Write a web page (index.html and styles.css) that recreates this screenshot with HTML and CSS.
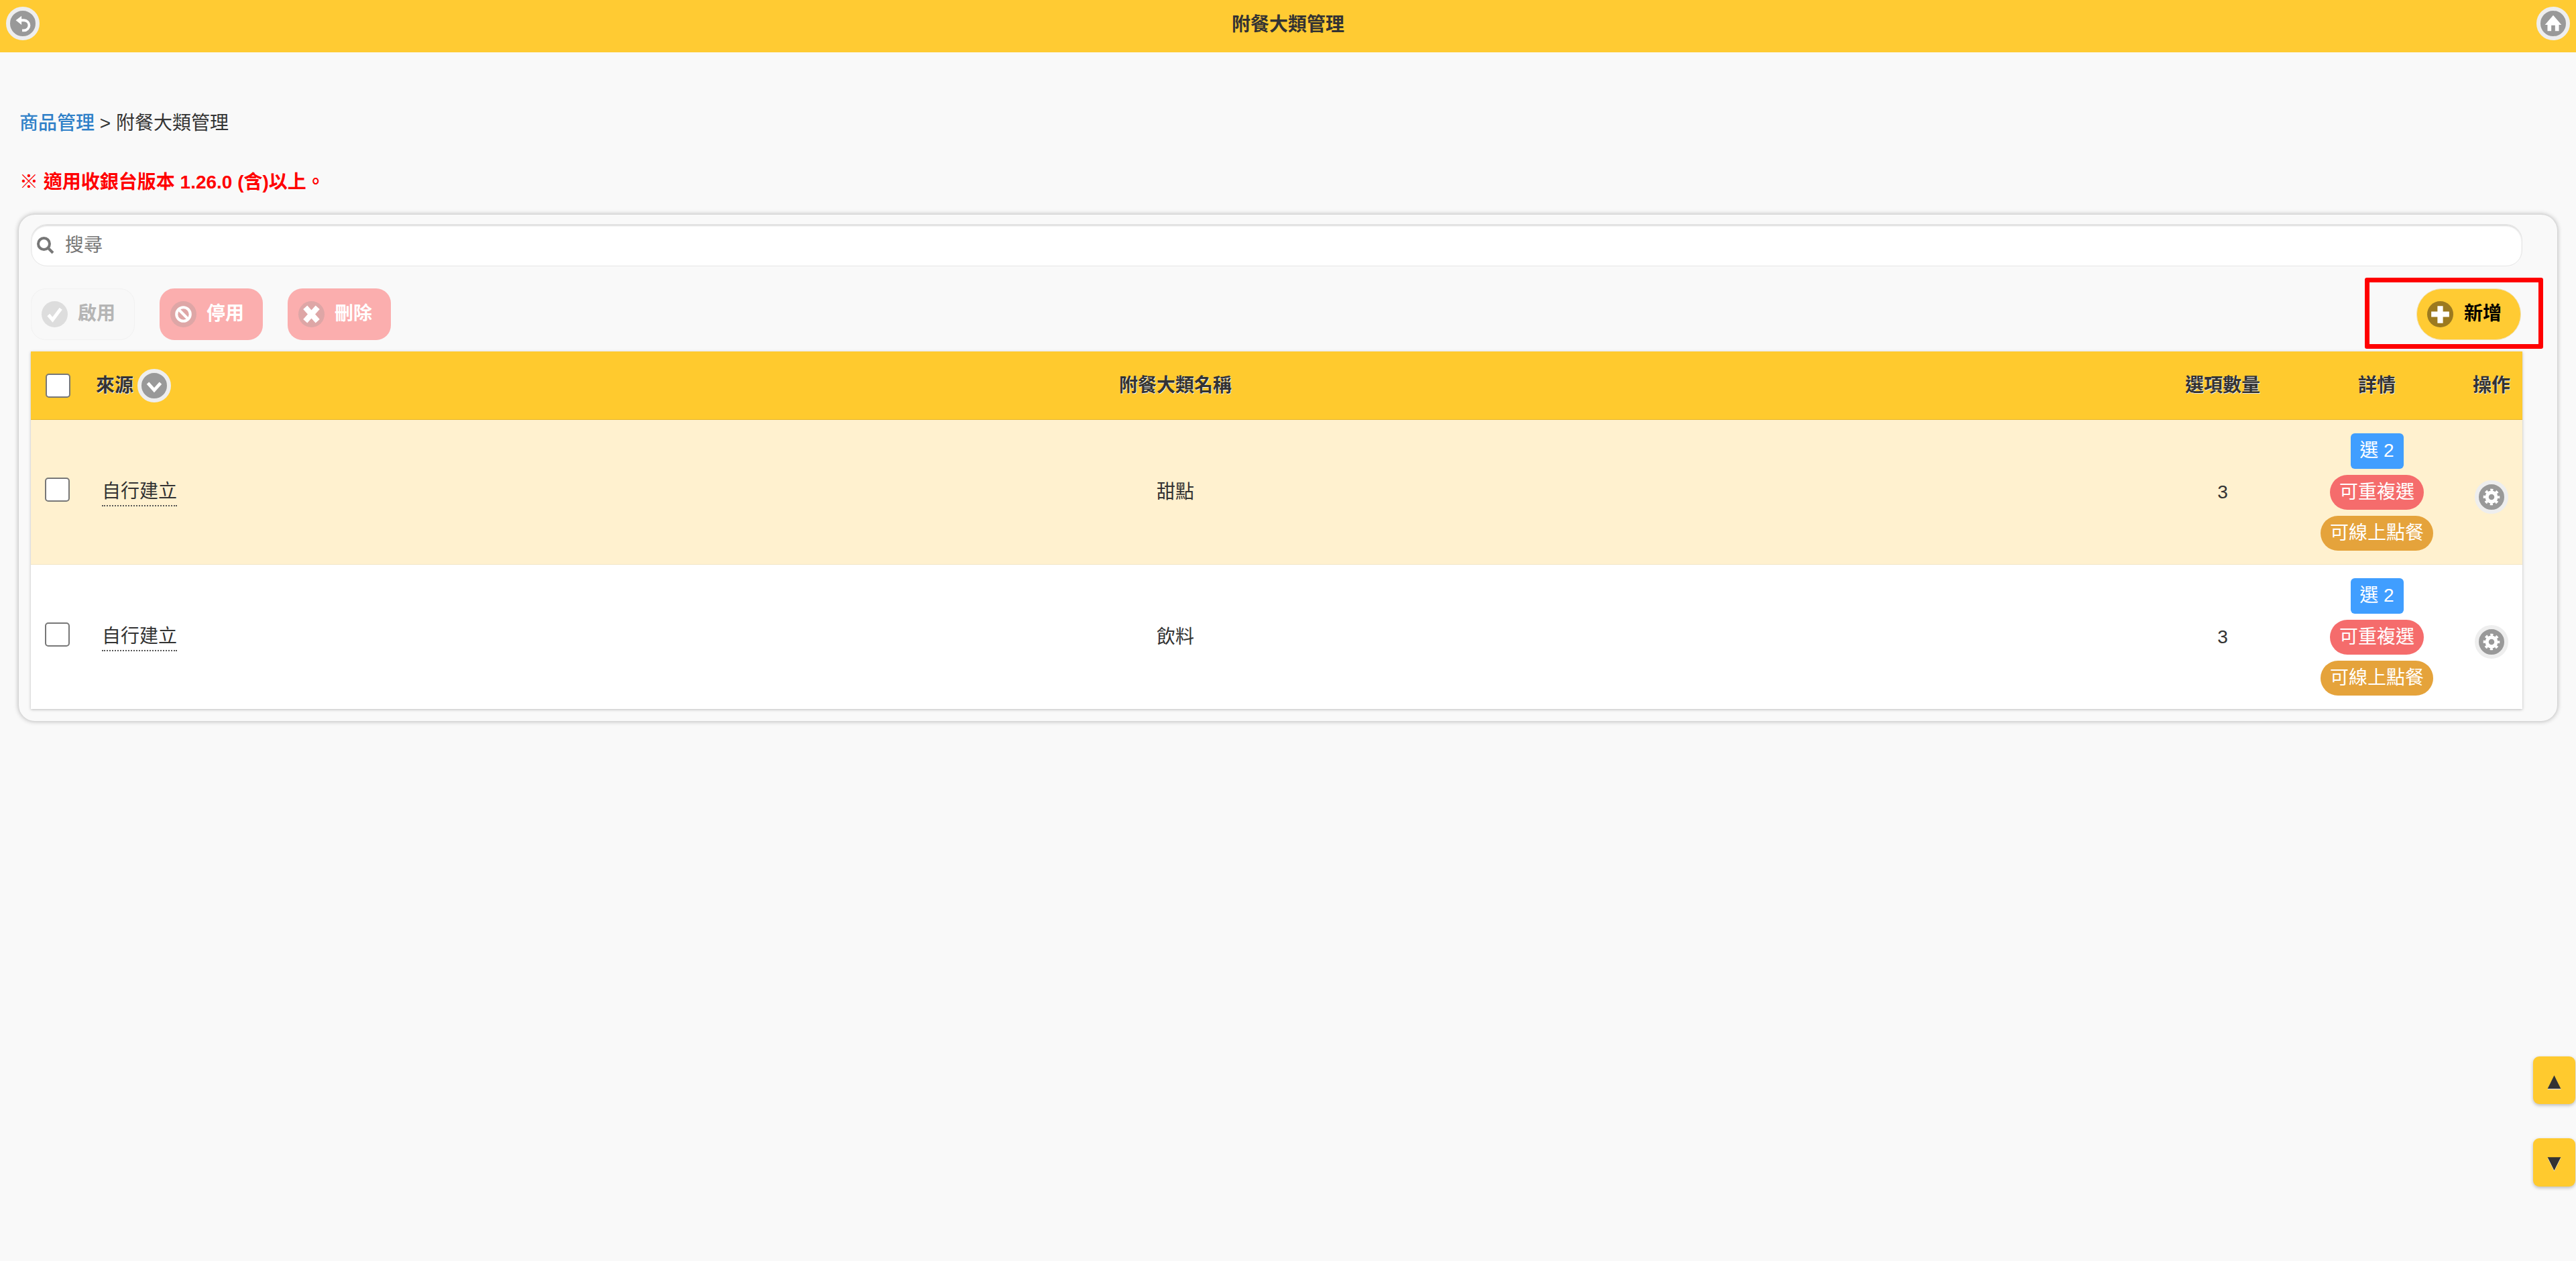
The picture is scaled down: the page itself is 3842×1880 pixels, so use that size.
FILE: index.html
```html
<!DOCTYPE html>
<html lang="zh-Hant">
<head>
<meta charset="utf-8">
<title>附餐大類管理</title>
<link rel="stylesheet" href="styles.css">
</head>
<body>
<header class="topbar">
  <span class="round-icon">
    <svg viewBox="0 0 38 38"><path class="ico-curve" d="M16 14h5a8 8 0 0 1 0 16h-3"/><path class="ico-fill" d="M17 7v14l-9-7z"/></svg>
  </span>
  <h1 class="title">附餐大類管理</h1>
  <span class="round-icon">
    <svg viewBox="0 0 38 38"><path class="ico-fill" d="M19 6 32 21h-4v10h-6v-9h-6v9h-6V21H6z"/></svg>
  </span>
</header>

<main class="main">
  <p class="crumb"><a class="crumb-link">商品管理</a> &gt; 附餐大類管理</p>
  <p class="notice"><span class="notice-mark">※</span> 適用收銀台版本 1.26.0 (含)以上。</p>

  <section class="card">
    <div class="search">
      <svg class="search-icon" viewBox="0 0 26 26"><circle cx="10.500" cy="10.500" r="8.500"/><path d="M16.500 16.500 24 24"/></svg>
      <span class="search-text">搜尋</span>
    </div>

    <div class="toolbar">
      <button class="btn btn-off">
        <span class="btn-icon icon-off"><svg viewBox="0 0 38 38"><path d="M10 20l6 7 12-16" class="ico-stroke"/></svg></span>啟用
      </button>
      <button class="btn btn-red">
        <span class="btn-icon icon-red"><svg viewBox="0 0 38 38"><circle cx="19" cy="19" r="10" class="ico-thin"/><path d="M12 12l14 14" class="ico-thin"/></svg></span>停用
      </button>
      <button class="btn btn-red">
        <span class="btn-icon icon-red"><svg viewBox="0 0 38 38"><path d="M10 9l18 20M28 9 10 29" class="ico-heavy"/></svg></span>刪除
      </button>
      <button class="btn-add">
        <span class="btn-icon icon-add"><svg viewBox="0 0 38 38"><path class="ico-fill" d="M15 7h8v8h9v8h-9v9h-8v-9H6v-8h9z"/></svg></span>新增
      </button>
      <span class="highlight"></span>
    </div>

    <div class="table">
      <div class="row row-head">
        <span class="cell"><input class="check check-head" type="checkbox"></span>
        <span class="cell cell-source">來源
          <span class="round-icon round-icon-inline">
            <svg viewBox="0 0 38 38"><path class="ico-stroke" d="M9 15l10 11 10-11"/></svg>
          </span>
        </span>
        <span class="cell cell-center">附餐大類名稱</span>
        <span class="cell cell-center">選項數量</span>
        <span class="cell cell-center">詳情</span>
        <span class="cell cell-center">操作</span>
      </div>

      <div class="row row-selected">
        <span class="cell"><input class="check" type="checkbox"></span>
        <span class="cell"><span class="source">自行建立</span></span>
        <span class="cell cell-center">甜點</span>
        <span class="cell cell-center">3</span>
        <span class="cell cell-tags">
          <span class="tag tag-blue">選 2</span>
          <span class="tag tag-red">可重複選</span>
          <span class="tag tag-orange">可線上點餐</span>
        </span>
        <span class="cell cell-center cell-op">
          <span class="round-icon"><svg viewBox="0 0 38 38"><circle cx="19" cy="19" r="7.250" class="gear-ring"/><circle cx="19" cy="19" r="11" class="gear-teeth"/></svg></span>
        </span>
      </div>

      <div class="row row-plain">
        <span class="cell"><input class="check" type="checkbox"></span>
        <span class="cell"><span class="source">自行建立</span></span>
        <span class="cell cell-center">飲料</span>
        <span class="cell cell-center">3</span>
        <span class="cell cell-tags">
          <span class="tag tag-blue">選 2</span>
          <span class="tag tag-red">可重複選</span>
          <span class="tag tag-orange">可線上點餐</span>
        </span>
        <span class="cell cell-center cell-op">
          <span class="round-icon"><svg viewBox="0 0 38 38"><circle cx="19" cy="19" r="7.250" class="gear-ring"/><circle cx="19" cy="19" r="11" class="gear-teeth"/></svg></span>
        </span>
      </div>
    </div>
  </section>
</main>

<div class="scroll-btns">
  <button class="scroll-btn">▲</button>
  <button class="scroll-btn scroll-btn-down">▼</button>
</div>
</body>
</html>
```

FILE: styles.css
```css
* { box-sizing: border-box; }
html, body { margin: 0; height: 100%; }
body {
  background: #f9f9f9;
  color: #333;
  font-family: "Liberation Sans", "Noto Sans CJK TC", sans-serif;
  font-size: 28px;
  line-height: 40px;
  overflow: hidden;
}
svg { display: block; width: 100%; height: 100%; }
.ico-fill { fill: #fff; }
.ico-curve { fill: none; stroke: #fff; stroke-width: 4; }
.ico-stroke { fill: none; stroke: #fff; stroke-width: 5; }
.ico-thin { fill: none; stroke: #fff; stroke-width: 4; }
.ico-heavy { fill: none; stroke: #fff; stroke-width: 8; }
.gear-ring { fill: none; stroke: #fff; stroke-width: 5.500; }
.gear-teeth { fill: none; stroke: #fff; stroke-width: 4; stroke-dasharray: 4.320 4.320; stroke-dashoffset: 2.160; }

.topbar {
  height: 78px;
  background: #ffcb33;
  display: flex;
  align-items: flex-start;
  justify-content: space-between;
  padding: 10px 9px 0;
}
.title {
  margin: 7px 0 0;
  font-size: 28px;
  line-height: 40px;
  font-weight: 700;
}
.round-icon {
  display: block;
  width: 50px;
  height: 50px;
  flex: none;
  padding: 1px;
  border-radius: 50%;
  background: #999;
  border: 6px solid #eee;
}
.round-icon-inline { margin-left: 6px; }

.main { padding: 86px 0 0 28px; }
.crumb { margin: 0 0 48px 1px; }
.crumb-link { color: #2f80c8; font-weight: 500; }
.notice { margin: 0 0 28px 1px; color: #f00; font-weight: 700; }
.notice-mark { font-weight: 400; }

.card {
  width: 3786px;
  height: 755px;
  padding: 14px 52px 18px 18px;
  background: #f9f9f9;
  border-radius: 24px;
  box-shadow: 0 0 6px 1px #bbb;
}
.search {
  height: 63px;
  display: flex;
  align-items: center;
  gap: 16px;
  padding: 0 0 0 8px;
  background: #fff;
  border-radius: 24px;
  border: 1px solid #e6e6e6;
  box-shadow: inset 0 2px 2px #ddd;
  margin-bottom: 32px;
}
.search-icon { width: 26px; height: 26px; fill: none; stroke: #777; stroke-width: 4; flex: none; }
.search-text { color: #777; }

.toolbar {
  position: relative;
  height: 78px;
  display: flex;
  align-items: center;
  gap: 37px;
  margin-bottom: 17px;
}
.btn, .btn-add {
  font: inherit;
  font-size: 28px;
  font-weight: 700;
  display: flex;
  align-items: center;
  gap: 15px;
  padding: 0 0 0 15px;
  height: 77px;
  width: 154px;
  border-radius: 22px;
  border: 1px solid transparent;
}
.btn-off { width: 155px; background: #f8f8f8; border-color: #f2f2f2; color: #b5b5b5; }
.btn-red { background: #fbaeae; color: #fff; }
.btn-add {
  margin-left: auto;
  margin-right: 2px;
  width: 156px;
  gap: 16px;
  border-radius: 38px;
  background: #ffcb33;
  color: #000;
  border-color: #f0e2b8;
}
.btn-icon { display: block; width: 39px; height: 39px; border-radius: 50%; flex: none; }
.icon-off { background: #ddd; }
.icon-red { background: #dea6a6; }
.icon-add { background: #9c7a1f; }
.highlight {
  position: absolute;
  left: 3481px;
  top: -15px;
  width: 266px;
  height: 106px;
  border: 7px solid #f00;
  border-radius: 3px;
}

.table { box-shadow: 0 1px 4px rgba(0, 0, 0, .25); }
.row {
  display: grid;
  grid-template-columns: 90px 160px 1fr 210px 250px 92px;
  align-items: center;
}
.row-head {
  height: 102px;
  background: #ffca2e;
  border-bottom: 1px solid #e6b52a;
  font-weight: 700;
  text-shadow: 1px 1px 0 #eee;
}
.row-selected { height: 216px; background: #fff1cf; border-bottom: 1px solid #f3e6c6; }
.row-plain { height: 215px; background: #fff; }
.cell { display: flex; align-items: center; min-width: 0; }
.cell-center { justify-content: center; }
.cell-source { white-space: nowrap; margin-left: 7px; }
.cell-tags { flex-direction: column; gap: 9px; }
.cell-op { padding-top: 15px; }
.check {
  appearance: none;
  width: 37px;
  height: 36px;
  margin: 0 0 7px 21px;
  background: #fff;
  border: 2px solid #777;
  border-radius: 5px;
}
.check-head { margin: 0 0 0 22px; }
.source {
  margin-left: 16px;
  border-bottom: 2px dotted #555;
}
.tag {
  height: 52px;
  line-height: 52px;
  color: #fff;
  white-space: nowrap;
}
.tag-blue { width: 79px; height: 53px; text-align: center; background: #409eff; border-radius: 6px; }
.tag-red { width: 140px; text-align: center; background: #f56c6c; border-radius: 26px; }
.tag-orange { width: 168px; text-align: center; background: #e5a33b; border-radius: 26px; }

.scroll-btns {
  position: fixed;
  right: 1px;
  top: 1575px;
  display: flex;
  flex-direction: column;
  gap: 51px;
}
.scroll-btn {
  width: 63px;
  height: 71px;
  padding: 0;
  border: 0;
  border-radius: 9px;
  background: #ffca2e;
  color: #333;
  font-family: "DejaVu Sans", sans-serif;
  font-size: 26px;
  text-shadow: 0 1px 0 #fff;
  box-shadow: 0 2px 5px rgba(0, 0, 0, .25);
}
.scroll-btn-down { height: 72px; }
```
